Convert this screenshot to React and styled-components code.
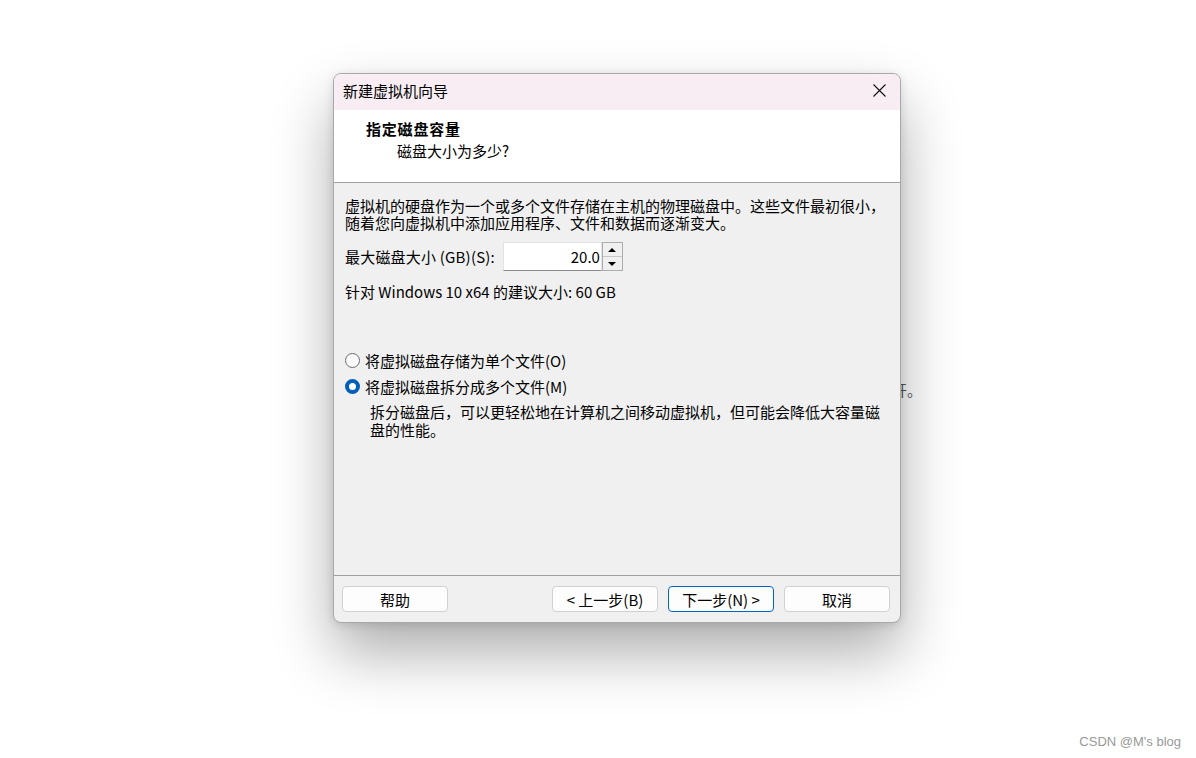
import styled, { createGlobalStyle } from "styled-components";

const Global = createGlobalStyle`
	html, body {
		margin: 0;
		padding: 0;
		background: #ffffff;
	}
	body {
		font-family: "Noto Sans CJK SC", "Noto Sans", sans-serif;
		color: #000;
	}
`;

const Page = styled.div`
	position: relative;
	width: 1196px;
	height: 758px;
	overflow: hidden;
	padding: 73px 0 0 333px;
	box-sizing: border-box;
`;

const BehindText = styled.span`
	position: absolute;
	left: 892px;
	top: 380px;
	font-size: 15px;
	line-height: 20px;
	color: #555;
	z-index: 0;
`;

const Dialog = styled.div`
	position: relative;
	z-index: 1;
	width: 568px;
	height: 550px;
	box-sizing: border-box;
	border: 1px solid #a8a8a8;
	border-radius: 8px;
	overflow: hidden;
	background: #f0f0f0;
	display: flex;
	flex-direction: column;
	box-shadow: 0 30px 60px rgba(0, 0, 0, 0.32), 0 2px 10px rgba(0, 0, 0, 0.12);
	font-size: 15px;
`;

const TitleBar = styled.div`
	height: 36px;
	box-sizing: border-box;
	background: #f7edf3;
	display: flex;
	align-items: center;
	justify-content: space-between;
	padding: 0 14px 3px 9px;
	font-size: 15px;
`;

const CloseIcon = styled.svg`
	width: 13px;
	height: 13px;
`;

const Header = styled.div`
	height: 73px;
	background: #ffffff;
	box-sizing: border-box;
	padding: 9px 0 0 32px;
	border-bottom: 1px solid #a0a0a0;
`;

const HeaderTitle = styled.div`
	font-weight: 700;
	font-size: 15px;
	line-height: 20px;
	letter-spacing: 0.8px;
`;

const HeaderSub = styled.div`
	padding-left: 31px;
	margin-top: 2px;
	font-size: 15px;
	line-height: 20px;
`;

const Body = styled.div`
	flex: 1;
	padding: 14px 11px 0 11px;
	display: flex;
	flex-direction: column;
	border-bottom: 1px solid #a0a0a0;
`;

const Para = styled.div`
	line-height: 17px;
`;

const SizeRow = styled.div`
	display: flex;
	align-items: center;
	margin-top: 11px;
	height: 29px;
`;

const Label = styled.span`
	margin-right: 8px;
	letter-spacing: 0.2px;
`;

const Input = styled.div`
	width: 99px;
	height: 29px;
	box-sizing: border-box;
	background: #fff;
	border: 1px solid #e3e3e3;
	border-bottom-color: #8a8a8a;
	display: flex;
	align-items: center;
	justify-content: flex-end;
	padding-right: 1px;
`;

const Spinner = styled.div`
	width: 21px;
	height: 29px;
	box-sizing: border-box;
	border: 1px solid #adadad;
	display: flex;
	flex-direction: column;
	background: #f0f0f0;
`;

const SpinBtn = styled.div`
	flex: 1;
	display: flex;
	align-items: center;
	justify-content: center;
	border-top: ${(p) => (p.bottom ? "1px solid #c8c8c8" : "none")};
`;

const Arrow = styled.div`
	width: 0;
	height: 0;
	border-left: 4px solid transparent;
	border-right: 4px solid transparent;
	${(p) => (p.down ? "border-top: 4px solid #000;" : "border-bottom: 4px solid #000;")}
`;

const Recommend = styled.div`
	margin-top: 12px;
	line-height: 17px;
`;

const RadioGroup = styled.div`
	margin-top: 52px;
	display: flex;
	flex-direction: column;
	gap: 9px;
`;

const RadioRow = styled.div`
	display: flex;
	align-items: center;
	height: 17px;
	gap: 5px;
`;

const RadioDot = styled.span`
	width: 15px;
	height: 15px;
	box-sizing: border-box;
	border-radius: 50%;
	flex-shrink: 0;
	${(p) =>
		p.checked
			? "background: #ffffff; border: 4.5px solid #005fb8;"
			: "background: #fbfbfb; border: 1px solid #6b6b6b;"}
`;

const Desc = styled.div`
	margin-top: 8px;
	padding-left: 25px;
	padding-right: 8px;
	line-height: 18px;
`;

const Footer = styled.div`
	height: 46px;
	box-sizing: border-box;
	padding: 10px 10px 0 8px;
	display: flex;
	gap: 10px;
`;

const Spacer = styled.div`
	flex: 1;
`;

const Button = styled.div`
	width: 106px;
	height: 26px;
	box-sizing: border-box;
	background: #fdfdfd;
	border: 1px solid ${(p) => (p.primary ? "#0067c0" : "#d0d0d0")};
	border-radius: 4px;
	display: flex;
	align-items: center;
	justify-content: center;
	font-size: 15px;
`;

const Watermark = styled.div`
	position: absolute;
	right: 15px;
	bottom: 9px;
	font-family: "Liberation Sans", sans-serif;
	font-size: 13px;
	color: #999;
`;

function App() {
	return (
		<Page>
			<Global />
			<BehindText>开。</BehindText>
			<Dialog>
				<TitleBar>
					<span>新建虚拟机向导</span>
					<CloseIcon viewBox="0 0 13 13">
						<path d="M0.5 0.5 L12.5 12.5 M12.5 0.5 L0.5 12.5" stroke="#111" strokeWidth="1.1" fill="none" />
					</CloseIcon>
				</TitleBar>
				<Header>
					<HeaderTitle>指定磁盘容量</HeaderTitle>
					<HeaderSub>磁盘大小为多少?</HeaderSub>
				</Header>
				<Body>
					<Para>虚拟机的硬盘作为一个或多个文件存储在主机的物理磁盘中。这些文件最初很小，</Para>
					<Para>随着您向虚拟机中添加应用程序、文件和数据而逐渐变大。</Para>
					<SizeRow>
						<Label>最大磁盘大小 (GB)(S):</Label>
						<Input>20.0</Input>
						<Spinner>
							<SpinBtn>
								<Arrow />
							</SpinBtn>
							<SpinBtn bottom>
								<Arrow down />
							</SpinBtn>
						</Spinner>
					</SizeRow>
					<Recommend>针对 Windows 10 x64 的建议大小: 60 GB</Recommend>
					<RadioGroup>
						<RadioRow>
							<RadioDot />
							<span>将虚拟磁盘存储为单个文件(O)</span>
						</RadioRow>
						<RadioRow>
							<RadioDot checked />
							<span>将虚拟磁盘拆分成多个文件(M)</span>
						</RadioRow>
					</RadioGroup>
					<Desc>拆分磁盘后，可以更轻松地在计算机之间移动虚拟机，但可能会降低大容量磁盘的性能。</Desc>
				</Body>
				<Footer>
					<Button>帮助</Button>
					<Spacer />
					<Button>&lt; 上一步(B)</Button>
					<Button primary>下一步(N) &gt;</Button>
					<Button>取消</Button>
				</Footer>
			</Dialog>
			<Watermark>CSDN @M's blog</Watermark>
		</Page>
	);
}

export default App;
